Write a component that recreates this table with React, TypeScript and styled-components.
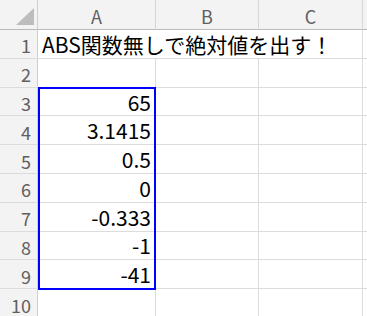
import React from "react";
import styled, { createGlobalStyle } from "styled-components";

const GlobalStyle = createGlobalStyle`
  html, body {
    margin: 0;
    padding: 0;
    background: #ffffff;
  }
  body {
    font-family: "Noto Sans CJK JP", "Noto Sans", sans-serif;
    overflow: hidden;
  }
`;

const HEADER_BG = "#f3f3f3";
const GRID = "#dcdcdc";

const Sheet = styled.div`
  display: grid;
  grid-template-columns: 38px 118px 103px 104px 1fr;
  grid-template-rows: 30px repeat(10, 28.8px);
  width: 367px;
  height: 316px;
  overflow: hidden;
`;

type Place = { $row: number; $col: number; $span?: number };

const placed = (p: Place) =>
  `grid-row: ${p.$row}; grid-column: ${p.$col} / span ${p.$span ?? 1};`;

const Corner = styled.div`
  grid-row: 1;
  grid-column: 1;
  background: ${HEADER_BG};
  border-right: 1px solid #cfcfcf;
  border-bottom: 1px solid #b9b9b9;
  display: flex;
  align-items: flex-end;
  justify-content: flex-end;
  padding: 0 3px 4px 0;
`;

const ColHead = styled.div<Place>`
  ${placed}
  background: ${HEADER_BG};
  border-right: 1px solid #d6d6d6;
  border-bottom: 1px solid #b9b9b9;
  color: #606060;
  font-size: 18px;
  display: flex;
  align-items: center;
  justify-content: center;
  padding-top: 3px;
  box-sizing: border-box;
`;

const RowHead = styled.div<Place>`
  ${placed}
  background: ${HEADER_BG};
  border-right: 1px solid #cfcfcf;
  border-bottom: 1px solid ${GRID};
  color: #606060;
  font-size: 18px;
  display: flex;
  align-items: center;
  justify-content: flex-end;
  padding: 3px 6px 0 0;
  box-sizing: border-box;
`;

const Cell = styled.div<Place & { $align?: "left" | "right" }>`
  ${placed}
  border-right: 1px solid ${GRID};
  border-bottom: 1px solid ${GRID};
  color: #000000;
  font-size: 21px;
  white-space: nowrap;
  display: flex;
  align-items: center;
  justify-content: ${(p) => (p.$align === "right" ? "flex-end" : "flex-start")};
  padding: 0 4px;
  box-sizing: border-box;
  min-width: 0;
`;

/* Blue outline around the selected range A3:A9 */
const Selection = styled.div`
  grid-column: 2;
  grid-row: 4 / 11;
  margin: -1px 0 -1px 0;
  border: 2px solid #0000ff;
  box-sizing: border-box;
  pointer-events: none;
  z-index: 1;
`;

const CornerMark = () => (
  <svg width="18" height="17" viewBox="0 0 18 17">
    <polygon points="18,0 18,17 0,17" fill="#bdbdbd" />
  </svg>
);

const columns = ["A", "B", "C", ""];
const values: (string | null)[] = [
  null,
  null,
  "65",
  "3.1415",
  "0.5",
  "0",
  "-0.333",
  "-1",
  "-41",
  null,
];

export default function App() {
  return (
    <>
      <GlobalStyle />
      <Sheet>
        <Corner>
          <CornerMark />
        </Corner>
        {columns.map((c, i) => (
          <ColHead key={i} $row={1} $col={i + 2}>
            {c}
          </ColHead>
        ))}

        {values.map((v, i) => {
          const row = i + 1;
          const gridRow = row + 1;
          if (row === 1) {
            return (
              <React.Fragment key={row}>
                <RowHead $row={gridRow} $col={1}>
                  {row}
                </RowHead>
                <Cell $row={gridRow} $col={2} $span={3}>
                  ABS関数無しで絶対値を出す！
                </Cell>
                <Cell $row={gridRow} $col={5} />
              </React.Fragment>
            );
          }
          return (
            <React.Fragment key={row}>
              <RowHead $row={gridRow} $col={1}>
                {row}
              </RowHead>
              <Cell $row={gridRow} $col={2} $align="right">
                {v}
              </Cell>
              <Cell $row={gridRow} $col={3} />
              <Cell $row={gridRow} $col={4} />
              <Cell $row={gridRow} $col={5} />
            </React.Fragment>
          );
        })}

        <Selection />
      </Sheet>
    </>
  );
}
